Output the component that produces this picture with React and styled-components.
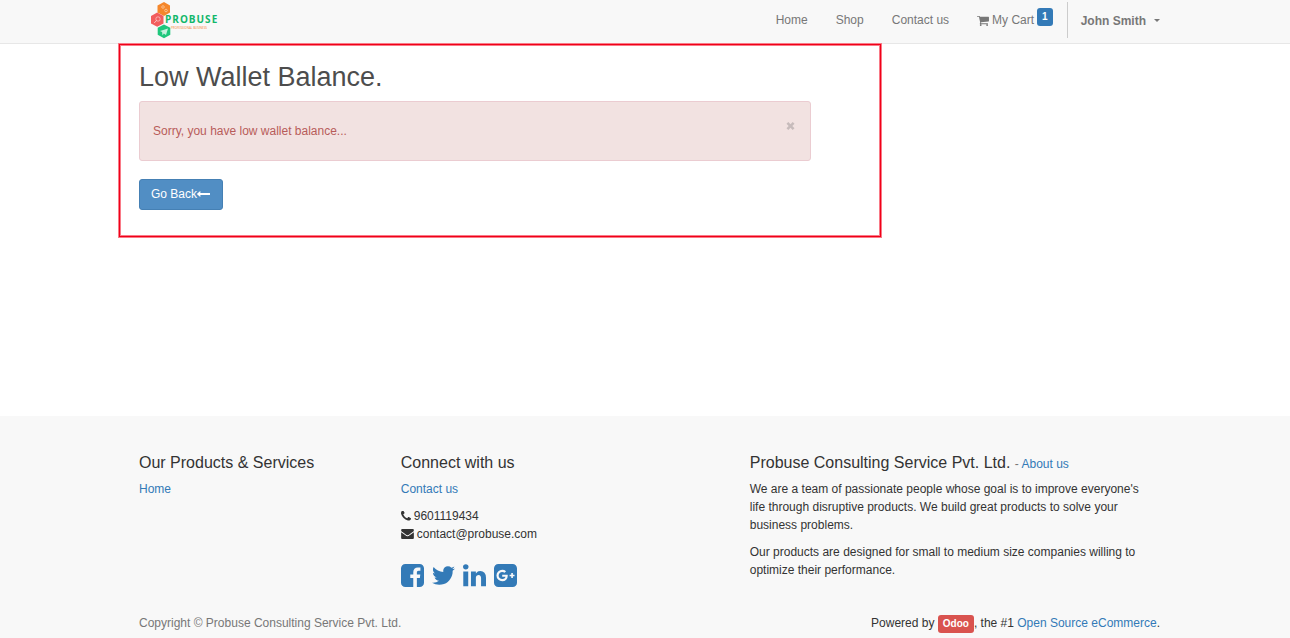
import React from "react";
import styled, { createGlobalStyle } from "styled-components";

const GlobalStyle = createGlobalStyle`
  *, *::before, *::after { box-sizing: border-box; }
  body {
    margin: 0;
    font: 12px/18px "Liberation Sans", Arial, sans-serif;
    color: #333;
    background: #fff;
  }
  h1, h2, p, ul { margin: 0; padding: 0; font-weight: 400; }
  ul { list-style: none; }
`;

const Page = styled.div`
  min-height: 100vh;
  display: flex;
  flex-direction: column;
`;

const Container = styled.div`
  width: 100%;
  max-width: 1056px;
  margin: 0 auto;
  padding: 0 13px 0 22px;
`;

const Header = styled.header`
  background: #f8f8f8;
  border-bottom: 1px solid #e7e7e7;
`;

const Bar = styled(Container)`
  display: flex;
  align-items: flex-start;
  justify-content: space-between;
  height: 43px;
`;

const Brand = styled.a`
  display: flex;
  padding-left: 12px;
  color: #12b76a;
  text-decoration: none;
`;

const BrandText = styled.span`
  display: flex;
  flex-direction: column;
  padding-top: 12px;
  margin-left: -6px;
`;

const BrandName = styled.span`
  font: 700 10px/14px "Open Sans", sans-serif;
  letter-spacing: 1px;
`;

const BrandTag = styled.span`
  padding: 0 0 0 6px;
  font: 3px/4px "Open Sans", sans-serif;
  color: #f58634;
`;

const Nav = styled.nav`
  display: flex;
  gap: 28px;
  padding-top: 2px;
`;

const NavLink = styled.a`
  display: flex;
  align-items: center;
  height: 36px;
  color: #777;
  text-decoration: none;
  white-space: nowrap;
`;

const CartBadge = styled.sup`
  align-self: flex-start;
  margin: 6px 0 0 3px;
  padding: 0 5px;
  border-radius: 3px;
  background: #337ab7;
  color: #fff;
  font: 700 10px/18px "Liberation Sans", Arial, sans-serif;
`;

const UserMenu = styled.button`
  display: flex;
  align-items: center;
  gap: 8px;
  height: 36px;
  margin-left: -14px;
  padding: 1px 0 0 13px;
  border: 0;
  border-left: 1px solid #ccc;
  background: none;
  color: #777;
  font: 700 12px/18px "Liberation Sans", Arial, sans-serif;
  &::after {
    content: "";
    border: 3px solid transparent;
    border-top-color: #777;
    border-bottom: 0;
  }
`;

const Main = styled.main`
  flex: 1;
`;

const Highlight = styled.section`
  max-width: 762px;
  margin-left: -20px;
  padding: 16px 69px 26px 19px;
  border: 1px solid #f00018;
  box-shadow: 0 0 0 1px #f97a87, inset 0 0 0 1px #f97a87;
`;

const Title = styled.h1`
  font-size: 27px;
  line-height: 32px;
  color: #4d4d4d;
`;

const Alert = styled.div`
  display: flex;
  justify-content: space-between;
  height: 60px;
  margin: 8px 0 18px;
  padding: 20px 15px 0 13px;
  border: 1px solid #ebccd1;
  border-radius: 3px;
  background: #f2e2e1;
  color: #b85c5a;
`;

const CloseButton = styled.button`
  align-self: flex-start;
  padding: 0;
  border: 0;
  background: none;
  line-height: 0;
`;

const PrimaryLink = styled.a`
  display: inline-flex;
  align-items: center;
  height: 31px;
  padding: 0 12px 2px 11px;
  border: 1px solid #4580b4;
  border-radius: 3px;
  background: #518ec4;
  color: #fff;
  text-decoration: none;
`;

const Footer = styled.footer`
  background: #f8f8f8;
`;

const Columns = styled.div`
  display: grid;
  grid-template-columns: 3fr 4fr 5fr;
  margin-right: -26px;
  padding-top: 37px;
`;

const Column = styled.section`
  padding-right: 26px;
`;

const Heading = styled.h2`
  margin-bottom: 7px;
  font-size: 16px;
  line-height: 20px;
`;

const Small = styled.small`
  font-size: 12px;
  line-height: 12px;
  color: #777;
`;

const Link = styled.a`
  color: #337ab7;
  text-decoration: none;
`;

const Paragraph = styled.p`
  max-width: 400px;
  margin-bottom: 9px;
`;

const ContactLine = styled.li`
  display: flex;
  align-items: center;
  gap: 3px;
`;

const Social = styled.div`
  display: flex;
  gap: 8px;
  margin-top: 21px;
`;

const Bottom = styled.div`
  display: flex;
  justify-content: space-between;
  padding: 26px 0 5px;
`;

const Copyright = styled.span`
  color: #777;
`;

const OdooBadge = styled.a`
  display: inline-block;
  padding: 0 5px;
  border-radius: 3px;
  background: #d9534f;
  color: #fff;
  font: 700 10px/18px "Liberation Sans", Arial, sans-serif;
  text-decoration: none;
`;

const GlyphSvg = styled.svg`
  display: block;
  flex: none;
  fill: ${(p) => p.$color || "currentColor"};
`;

const glyphs = {
  cart: ["64 128 1664 1536", "M704 1536q0 52-38 90t-90 38-90-38-38-90 38-90 90-38 90 38 38 90zm896 0q0 52-38 90t-90 38-90-38-38-90 38-90 90-38 90 38 38 90zm128-1088v512q0 24-16.5 42.5t-40.5 21.5l-1044 122q13 60 13 70 0 16-24 64h920q26 0 45 19t19 45-19 45-45 19h-1024q-26 0-45-19t-19-45q0-11 8-31.5t16-36 21.5-40 15.5-29.5l-177-823h-204q-26 0-45-19t-19-45 19-45 45-19h256q16 0 28.5 6.5t19.5 15.5 13 24.5 8 26 5.5 29.5 4.5 26h1201q26 0 45 19t19 45z"],
  arrow: ["64 512 1728 768", "M1792 780v232q0 14-9 23t-23 9h-1248v204q0 21-19 29t-35-5l-384-350q-10-10-10-23 0-14 10-24l384-354q16-14 35-6 19 9 19 29v204h1248q14 0 23 9t9 23z"],
  phone: ["192 256 1408 1280", "M1600 1240q0 27-10 70.5t-21 68.5q-21 50-122 106-94 51-186 51-27 0-53-3.5t-57.5-12.5-47-14.5-55.5-20.5-49-18q-98-35-175-83-127-79-264-216t-216-264q-48-77-83-175-3-9-18-49t-20.5-55.5-14.5-47-12.5-57.5-3.5-53q0-92 51-186 56-101 106-122 25-11 68.5-21t70.5-10q14 0 21 3 18 6 53 76 11 19 30 54t35 63.5 31 53.5q3 4 17.5 25t21.5 35.5 7 28.5q0 20-28.5 50t-62 55-62 53-28.5 46q0 9 5 22.5t8.5 20.5 14 24 11.5 19q76 137 174 235t235 174q2 1 19 11.5t24 14 20.5 8.5 22.5 5q18 0 46-28.5t53-62 55-62 50-28.5q14 0 28.5 7t35.5 21.5 25 17.5q25 15 53.5 31t63.5 35 54 30q70 35 76 53 3 7 3 21z"],
  mail: ["0 256 1792 1408", "M1792 710v794q0 66-47 113t-113 47h-1472q-66 0-113-47t-47-113v-794q44 49 101 87 362 246 497 345 57 42 92.5 65.5t94.5 48 110 24.5h2q51 0 110-24.5t94.5-48 92.5-65.5q170-123 498-345 57-39 100-87zm0-294q0 79-49 151t-122 123q-376 261-468 325-10 7-42.5 31t-54 38.8-52 32.5-57.5 27-50 9h-2q-23 0-50-9t-57.5-27-52-32.5-54-38.8-42.5-31q-91-64-262-182.5t-205-142.5q-62-42-117-115.5t-55-136.5q0-78 41.5-130t118.5-52h1472q65 0 112.5 47t47.5 113z"],
  facebook: ["128 128 1536 1536", "M1376 128q119 0 203.5 84.5t84.5 203.5v960q0 119-84.5 203.5t-203.5 84.5h-188v-595h199l30-232h-229v-148q0-56 23.5-84t91.5-28l122-1v-207q-63-9-178-9-136 0-217.5 80t-81.5 226v171h-200v232h200v595h-532q-119 0-203.5-84.5t-84.5-203.5v-960q0-119 84.5-203.5t203.5-84.5h960z"],
  twitter: ["108 128 1576 1536", "M1684 408q-67 98-162 167 1 14 1 42 0 130-38 259.5t-115.5 248.5-184.5 210.5-258 146-323 54.5q-271 0-496-145 35 4 78 4 225 0 401-138-105-2-188-64.5t-114-159.5q33 5 61 5 43 0 85-11-112-23-185.5-111.5t-73.5-205.5v-4q68 38 146 41-66-44-105-115t-39-154q0-88 44-163 121 149 294.5 238.5t371.5 99.5q-8-38-8-74 0-134 94.5-228.5t228.5-94.5q140 0 236 102 109-21 205-78-37 115-142 178 93-10 186-50z"],
  linkedin: ["128 128 1536 1536", "M477 625v991h-330v-991h330zm21-306q1 73-50.5 122t-135.5 49h-2q-82 0-132-49t-50-122q0-74 51.5-122.5t134.5-48.5 133 48.5 51 122.5zm1166 729v568h-329v-530q0-105-40.5-164.5t-126.5-59.5q-63 0-105.5 34.5t-63.5 85.5q-11 30-11 81v553h-329q2-399 2-647t-1-296l-1-48h329v144h-2q20-32 41-56t56.5-52 87-43.5 114.5-15.5q171 0 275 113.5t104 332.5z"],
  google: ["128 128 1536 1536", "M1045 905q0-26-6-64h-362v132h217q-3 24-16.5 50t-37.5 53-66.5 44.5-96.5 17.5q-99 0-169-71t-70-171 70-171 169-71q92 0 153 59l104-101q-108-100-257-100-160 0-272 112.5t-112 271.5 112 271.5 272 112.5q165 0 266.5-105t101.5-270zm345 46h109v-110h-109v-110h-110v110h-110v110h110v110h110v-110zm274-535v960q0 119-84.5 203.5t-203.5 84.5h-960q-119 0-203.5-84.5t-84.5-203.5v-960q0-119 84.5-203.5t203.5-84.5h960q119 0 203.5 84.5t84.5 203.5z"],
  close: ["0 0 8 8", "M1.8 0 4 2.2 6.2 0 8 1.8 5.8 4 8 6.2 6.2 8 4 5.8 1.8 8 0 6.2 2.2 4 0 1.8z"],
};

function Glyph({ name, width, height, color }) {
  const [viewBox, d] = glyphs[name];
  return (
    <GlyphSvg viewBox={viewBox} width={width} height={height} $color={color} aria-hidden="true">
      <path d={d} />
    </GlyphSvg>
  );
}

function LogoMark() {
  return (
    <svg width="20" height="40" viewBox="0 0 20 40" aria-hidden="true">
      <path d="M13 2l6 3.500v7L13 16l-6.500-3.500v-7z" fill="#f5872b" />
      <path d="M6.200 12.500l6.300 3.500v7.500l-6.300 3.300L0 23.500V16z" fill="#f25d5d" />
      <path d="M13 24.500l6.300 3.300v7L13 38.300l-6.300-3.500v-7z" fill="#1fc77c" />
      <g fill="none" stroke="#fff" strokeOpacity=".6">
        <circle cx="12" cy="7" r="1.3" strokeWidth=".7" />
        <circle cx="15" cy="10.500" r="1.3" strokeWidth=".7" />
        <circle cx="7" cy="19" r="2.200" strokeWidth=".8" />
        <path d="M5.500 20.500 3.200 23" />
      </g>
      <path d="M9 31l8-2.500-2 6.500-2.200-1.600-1.300 2-.4-3.400z" fill="#fff" fillOpacity=".75" />
    </svg>
  );
}

const socials = [
  ["Facebook", "facebook"],
  ["Twitter", "twitter"],
  ["LinkedIn", "linkedin"],
  ["Google Plus", "google"],
];

const CartLabel = styled.span`
  margin-left: 3px;
`;

export default function App() {
  return (
    <Page>
      <GlobalStyle />
      <Header>
        <Bar>
          <Brand href="#">
            <LogoMark />
            <BrandText>
              <BrandName>PROBUSE</BrandName>
              <BrandTag>PROFESSIONAL BUSINESS</BrandTag>
            </BrandText>
          </Brand>
          <Nav>
            <NavLink href="#">Home</NavLink>
            <NavLink href="#">Shop</NavLink>
            <NavLink href="#">Contact us</NavLink>
            <NavLink href="#">
              <Glyph name="cart" width={12} height={11} />
              <CartLabel>My Cart</CartLabel>
              <CartBadge>1</CartBadge>
            </NavLink>
            <UserMenu type="button">John Smith</UserMenu>
          </Nav>
        </Bar>
      </Header>
      <Main>
        <Container>
          <Highlight>
            <Title>Low Wallet Balance.</Title>
            <Alert role="alert">
              <p>Sorry, you have low wallet balance...</p>
              <CloseButton type="button" aria-label="Close">
                <Glyph name="close" width={9} height={8} color="#c7bbbb" />
              </CloseButton>
            </Alert>
            <PrimaryLink href="#">
              Go Back
              <Glyph name="arrow" width={13} height={6} />
            </PrimaryLink>
          </Highlight>
        </Container>
      </Main>
      <Footer>
        <Container>
          <Columns>
            <Column>
              <Heading>Our Products &amp; Services</Heading>
              <Link href="#">Home</Link>
            </Column>
            <Column>
              <Heading>Connect with us</Heading>
              <Paragraph><Link href="#">Contact us</Link></Paragraph>
              <ul>
                <ContactLine><Glyph name="phone" width={10} height={10} />9601119434</ContactLine>
                <ContactLine><Glyph name="mail" width={13} height={10} />contact@probuse.com</ContactLine>
              </ul>
              <Social>
                {socials.map(([label, name]) => (
                  <Link href="#" key={name} aria-label={label}>
                    <Glyph name={name} width={23} height={23} />
                  </Link>
                ))}
              </Social>
            </Column>
            <Column>
              <Heading>
                Probuse Consulting Service Pvt. Ltd. <Small>- <Link href="#">About us</Link></Small>
              </Heading>
              <Paragraph>
                We are a team of passionate people whose goal is to improve everyone's life through
                disruptive products. We build great products to solve your business problems.
              </Paragraph>
              <Paragraph>
                Our products are designed for small to medium size companies willing to optimize
                their performance.
              </Paragraph>
            </Column>
          </Columns>
          <Bottom>
            <Copyright>Copyright © Probuse Consulting Service Pvt. Ltd.</Copyright>
            <span>
              Powered by <OdooBadge href="#">Odoo</OdooBadge>, the #1{" "}
              <Link href="#">Open Source eCommerce</Link>.
            </span>
          </Bottom>
        </Container>
      </Footer>
    </Page>
  );
}
